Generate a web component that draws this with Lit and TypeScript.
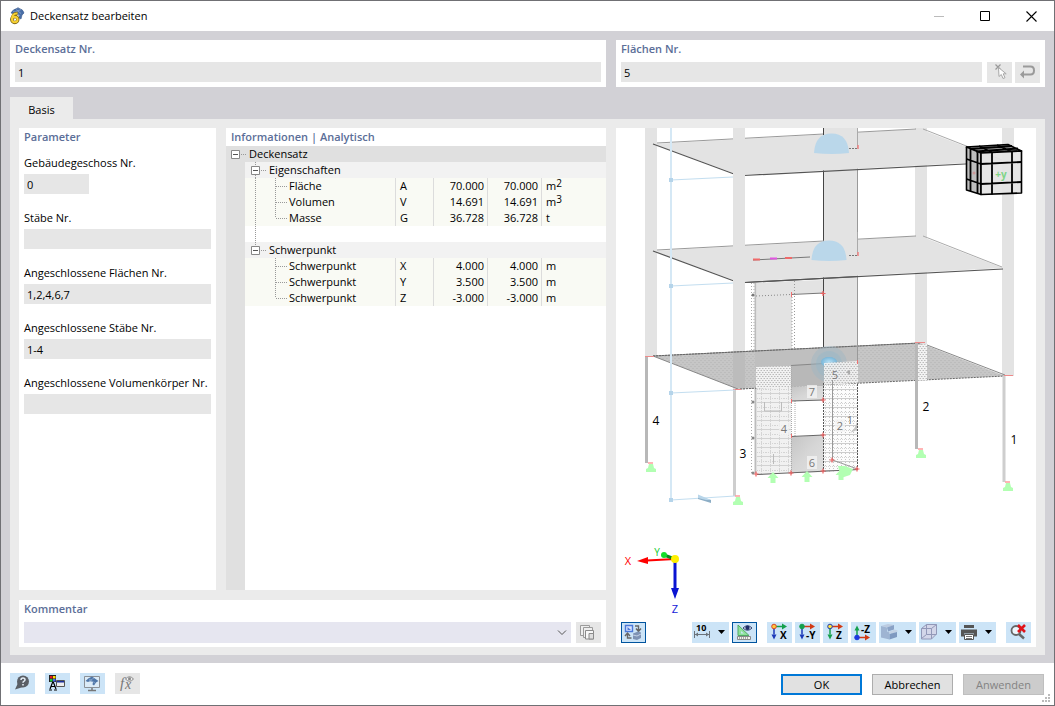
import { LitElement, html, svg, css, nothing } from "lit";
import { customElement, property } from "lit/decorators.js";

const base = css`
  * { box-sizing: border-box; }
  :host { font-family: "Open Sans", "Noto Sans", sans-serif; font-size: 11px; line-height: 16px; color: #000; }
  button, input, select { font: inherit; color: inherit; margin: 0; border: 0; padding: 0; border-radius: 0; }
  svg { display: block; }
  h2 { margin: 0; height: 18px; line-height: 18px; font-size: 11px; font-weight: 600; color: #5b6e98; }
`;

/* ---------- icons ---------- */

const icon = (body: unknown, w = 25, h = 21) =>
  html`<svg width=${w} height=${h} viewBox="0 0 ${w} ${h}" aria-hidden="true">${body}</svg>`;

const down = svg`<path d="M26 8h7l-3.500 4z" fill="#000"/>`;

const axes = (ox: number, oy: number, dot: string, hc: string, vc: string, up: boolean, label: string, lx: number, ly: number) => svg`
  <path d="M${ox} ${oy}h9" stroke=${hc} stroke-width="1.500"/>
  <path d="M${ox + 8} ${oy - 3}l5 3l-5 3z" fill=${hc}/>
  <path d="M${ox} ${oy}v${up ? -8 : 8}" stroke=${vc} stroke-width="1.500"/>
  <path d=${up ? `M${ox - 2.5} ${oy - 7}l2.500 -5l2.500 5z` : `M${ox - 2.5} ${oy + 8}l2.500 5l2.500 -5z`} fill=${vc}/>
  <circle cx=${ox} cy=${oy} r="2.300" fill=${dot} stroke=${dot === "#ffe23c" ? "#1c39b8" : dot === "#ffc83c" ? "#d8452a" : dot}/>
  <text x=${lx} y=${ly} font-size="10" font-weight="700">${label}</text>`;

const icons: Record<string, unknown> = {
  sync: icon(svg`
    <path d="M4.500 3.500h7v6h-7z" fill="#dbe6ff" stroke="#4c78d8" stroke-width="1.400"/><path d="M6.500 5v3h3.500z" fill="#4c78d8"/>
    <path d="M14 4h3.500v4M15 6.500l2.500 3l2.500-3" fill="none" stroke="#666" stroke-width="1.400"/>
    <path d="M10.500 16h-4v-4M4 14l2.500-3l2.500 3" fill="none" stroke="#666" stroke-width="1.400"/>
    <path d="M12 11.500l5-2l3 1v5.500l-4 2l-4-1z" fill="#7e92b4"/><path d="M12 13l4 1l4-2" stroke="#c5d2e6" fill="none"/>`),
  dim: icon(svg`<path d="M2.500 9v7M17.500 9v7M3 12.500h14" stroke="#6b737b" fill="none"/><path d="M3 12.500l3-2v4zM17 12.500l-3-2v4z" fill="#6b737b"/>
    <text x="4" y="9" font-size="9" font-weight="700">10</text>${down}`, 37),
  ruler: icon(svg`<path d="M6 3v10.500h11z" fill="#8fe29a" stroke="#52a865"/><path d="M9 9v2.500h3z" fill="#cce4f7"/>
    <path d="M5.500 14.500h13v3h-13z" fill="#f4f4ea" stroke="#8b8b8b"/><path d="M7.500 15v2M9.500 15v2M11.500 15v2M13.500 15v2M15.500 15v2" stroke="#aaa"/>
    <path d="M11 6q4.500-4.500 9 0q-4.500 4.500-9 0z" fill="#e8ecff" stroke="#30406e"/><circle cx="15.500" cy="5.700" r="2.200" fill="#1f2e68"/>`),
  ax: icon(axes(7, 4.5, "#ffc83c", "#14a04c", "#1c39b8", false, "X", 13, 17)),
  ay: icon(axes(7, 4.5, "#14a04c", "#d23a14", "#1c39b8", false, "-Y", 11, 17)),
  az: icon(axes(7, 4.5, "#ffe23c", "#d23a14", "#14a04c", false, "Z", 13, 17)),
  amz: icon(axes(6, 15.5, "#1c39e0", "#d23a14", "#14a04c", true, "-Z", 10, 11)),
  steps: icon(svg`<path d="M2 4l7-2l6 1l-6 2.500z" fill="#bccbe0"/><path d="M2 4l6 1.500v4l2.500.500v7.500l-8.500-2z" fill="#9eb4d2"/>
    <path d="M8 5.500l7-2.500v4.500l-6 2z" fill="#8aa2c6"/><path d="M9.500 10l6-2.500l3 1v1l-6 2.500z" fill="#c3d1e4"/><path d="M10.500 12l7.500-2v5l-7.500 2.500z" fill="#7f99c0"/>${down}`, 37),
  box: icon(svg`<path d="M2.500 6.500l5-4h10v9.500l-5 5h-10z" fill="#d3d6e9"/><path d="M2.500 6.500l5-4h10l-5 4zM12.500 6.500v10.500M2.500 6.500v10.500h10l5-5v-9.500M7.500 2.500v10h10M7.500 12.500l-5 4" fill="none" stroke="#9298b8"/>${down}`, 37),
  print: icon(svg`<path d="M5 3h10v3h-10z" fill="#555"/><path d="M2 7.500h16v7h-3v-3h-10v3h-3z" fill="#555"/><path d="M5.500 12.500h9v5h-9z" fill="#fff" stroke="#555"/><path d="M7 14.500h6M7 16.500h6" stroke="#777"/>${down}`, 37),
  nozoom: icon(svg`<circle cx="10" cy="8.500" r="4.500" fill="#eef5fb" stroke="#666" stroke-width="1.800"/><path d="M13 12l5 4.500" stroke="#666" stroke-width="2.500"/>
    <path d="M12 3l7 7M19 3l-7 7" stroke="#e0131a" stroke-width="2.600"/>`),
  pick: icon(svg`<path d="M8.500 2.500l5 5M13.500 2.500l-5 5" stroke="#999" stroke-width="1.200"/>
    <path d="M11.500 5.500l.500 9l2.300-2l1.700 4l2-.800l-1.800-3.900h3z" fill="#fff" stroke="#a8a8a8"/>`),
  back: icon(svg`<path d="M8 4.500h7.500q3.500 0 3.500 4t-3.500 4h-8" fill="none" stroke="#9a9a9a" stroke-width="2"/><path d="M9 8.500l-4 4l4 4z" fill="#9a9a9a"/>`),
  copy: icon(svg`<path d="M4.500 3.500h9v10h-9z" fill="#eee" stroke="#9b9b9b"/><path d="M7.500 5.500h9v10h-9z" fill="#eee" stroke="#9b9b9b"/><path d="M9.500 8.500h8v8.500h-8z" fill="#f7f7f7" stroke="#8a8a8a"/><path d="M13 11.500h4.500v5.500h-4.500z" fill="#ddd" stroke="#8a8a8a"/>`),
  help: icon(svg`<circle cx="13" cy="8.500" r="6" fill="#5a5f66"/><path d="M8 10l-3 6.500l8-2.500z" fill="#5a5f66"/>
    <path d="M11 7q0-2 2-2t2 1.800q0 1-1.200 1.600q-.8.400-.8 1.300" fill="none" stroke="#e4eef7" stroke-width="1.500"/><path d="M12.200 11h1.600v1.500h-1.600z" fill="#e4eef7"/>`),
  colors: icon(svg`<path d="M4 2h7v7h-7z" fill="#222"/><path d="M5 3h2.500v2.500h-2.500z" fill="#e41b23"/><path d="M8 3h2.500v2.500h-2.500z" fill="#ffe000"/><path d="M5 6h2.500v2.500h-2.500z" fill="#1ac83c"/><path d="M8 6h2.500v2.500h-2.500z" fill="#4a62f0"/>
    <path d="M5 16l2.500-6.500h1l2.500 6.500M6 13.500h4" stroke="#000" fill="none" stroke-width="1.200"/><path d="M4 17h3M9 17h3" stroke="#000"/>
    <path d="M11.500 7.500h8v6h-8z" fill="#eee" stroke="#555"/><path d="M12 8h7v1.500h-7z" fill="#1b2f9c"/>`),
  screen: icon(svg`<path d="M4.500 3.500h15v11h-15z" fill="#dcebf7" stroke="#8a9097"/><path d="M5.500 8q3-3.500 6.500-4.500l6.500 4.500l-2.500 1.500l-2 3l-1.500-1l.5-2.500q-3-1.500-5 0z" fill="#4f76a8"/><path d="M9 6l6 4M14 5l-5 3" stroke="#9db9d8" stroke-width=".6"/><path d="M12 15v2M8 17.500h8" stroke="#777" stroke-width="1.500"/>`),
  fx: icon(svg`<text x="5" y="15" font-family="Liberation Serif, serif" font-style="italic" font-size="15" fill="#777">f</text>
    <text x="10" y="16" font-family="Liberation Serif, serif" font-style="italic" font-size="14" fill="#777">x</text>
    <path d="M10.500 6q4-4.500 8 0q-4 4.500-8 0z" fill="#eee" stroke="#888"/><circle cx="14.500" cy="5.800" r="1.500" fill="#888"/>`),
};

const logo = html`<svg width="18" height="18" viewBox="0 0 18 18" aria-hidden="true">
  <path d="M3 6q2-4 6-4.500l1-1l1 1q4 .5 5 4.500l-2 2l-1 4l-2-1V8z" fill="#4a6fa8" stroke="#36558a" stroke-width=".6"/>
  <path d="M8 2.500l5 4M5 4l7 5M13 2.500l-7 3" stroke="#9fb8d8" stroke-width=".6"/>
  <path d="M9.500 6.500q-5-.5-5 6" fill="none" stroke="#7a6414" stroke-width="3.400"/><circle cx="6.800" cy="12.500" r="3" fill="none" stroke="#7a6414" stroke-width="3.400"/>
  <path d="M9.500 6.500q-5.500-.5-5.500 6" fill="none" stroke="#f6d032" stroke-width="2"/><circle cx="6.800" cy="12.500" r="2.800" fill="none" stroke="#f6d032" stroke-width="2"/></svg>`;

/* ---------- small parts ---------- */

@customElement("icon-button")
class IconButton extends LitElement {
  @property() name = "";
  @property() label = "";
  @property({ type: Boolean }) active = false;
  @property({ type: Boolean }) disabled = false;
  static styles = [base, css`
    :host { display: block; flex: none; }
    button { display: block; height: 21px; background: #cce4f7; }
    .active { box-shadow: inset 0 0 0 1px #00549e; }
    button:disabled { background: #e6e6e6; }
  `];
  render() {
    return html`<button class=${this.active ? "active" : ""} aria-label=${this.label} ?disabled=${this.disabled}>${icons[this.name]}</button>`;
  }
}

/* ---------- property tree ---------- */

type Row = { kind: "root" | "group" | "leaf" | "gap"; name?: string; sym?: string; value?: string; unit?: string; sup?: string; rail?: boolean; last?: boolean };

const rows: Row[] = [
  { kind: "root", name: "Deckensatz" },
  { kind: "group", name: "Eigenschaften", rail: true },
  { kind: "leaf", name: "Fläche", sym: "A", value: "70.000", unit: "m", sup: "2", rail: true },
  { kind: "leaf", name: "Volumen", sym: "V", value: "14.691", unit: "m", sup: "3", rail: true },
  { kind: "leaf", name: "Masse", sym: "G", value: "36.728", unit: "t", rail: true, last: true },
  { kind: "gap", rail: true },
  { kind: "group", name: "Schwerpunkt" },
  { kind: "leaf", name: "Schwerpunkt", sym: "X", value: "4.000", unit: "m" },
  { kind: "leaf", name: "Schwerpunkt", sym: "Y", value: "3.500", unit: "m" },
  { kind: "leaf", name: "Schwerpunkt", sym: "Z", value: "-3.000", unit: "m", last: true },
];

@customElement("property-tree")
class PropertyTree extends LitElement {
  static styles = [base, css`
    :host { display: block; background: linear-gradient(to right, #e0e0e0 19px, #fff 19px); }
    table { width: 100%; table-layout: fixed; border-collapse: separate; border-spacing: 0; }
    .c-gutter { width: 19px; } .c-name { width: 150px; } .c-sym { width: 38px; } .c-num { width: 54px; }
    td { padding: 0; height: 16px; line-height: 16px; vertical-align: top; white-space: nowrap; }
    .node { display: flex; height: 16px; padding-left: 6px; }
    .root .node { padding-left: 5px; }
    .root td { background: #e0e0e0; }
    .group .main { background: #f2f2f2; }
    .leaf .main { background: #f9faf4; }
    .cell { border-left: 1px solid #dcdcdc; padding: 0 4px; }
    .num { text-align: right; padding: 0 3px; }
    button { background: none; display: block; }
    .dots { stroke: #999; stroke-dasharray: 1 1; fill: none; }
    sup { font-size: 10px; line-height: 0; vertical-align: 3px; }
  `];
  private toggle(r: Row) {
    return html`<button aria-label="Zuklappen"><svg width="18" height="16" viewBox="0 0 18 16">
      <path class="dots" d="M10 8.500h5"/>
      ${r.kind === "group" ? svg`<path class="dots" d="M4.500 0v4"/>` : nothing}
      ${r.rail ? svg`<path class="dots" d="M4.500 13v3"/>` : nothing}
      <path d="M.5 4.500h8v8h-8z" fill="#fff" stroke="#888"/><path d="M2 8.500h5" stroke="#555"/></svg></button>`;
  }
  private lines(r: Row) {
    return html`<svg width="38" height="16" viewBox="0 0 38 16">
      ${r.rail ? svg`<path class="dots" d="M4.500 0v16"/>` : nothing}
      ${r.kind === "leaf" ? svg`<path class="dots" d="M24.500 0v${r.last ? 8 : 16}M25 8.500h11"/>` : nothing}</svg>`;
  }
  render() {
    return html`<table>
      <colgroup><col class="c-gutter"><col class="c-name"><col class="c-sym"><col class="c-num"><col class="c-num"><col></colgroup>
      <tbody>${rows.map((r) => {
        if (r.kind === "root") return html`<tr class="root"><td colspan="6"><div class="node">${this.toggle(r)}<span>${r.name}</span></div></td></tr>`;
        if (r.kind === "group") return html`<tr class="group"><td></td><td class="main" colspan="5"><div class="node">${this.toggle(r)}<span>${r.name}</span></div></td></tr>`;
        if (r.kind === "gap") return html`<tr><td></td><td colspan="5"><div class="node">${this.lines(r)}</div></td></tr>`;
        return html`<tr class="leaf"><td></td><td class="main"><div class="node">${this.lines(r)}<span>${r.name}</span></div></td>
          <td class="main cell">${r.sym}</td><td class="main cell num">${r.value}</td><td class="main cell num">${r.value}</td>
          <td class="main cell">${r.unit}${r.sup ? html`<sup>${r.sup}</sup>` : nothing}</td></tr>`;
      })}</tbody></table>`;
  }
}

/* ---------- 3D model view ---------- */

const slab = (dy: number) => svg`
  <path d="M653 ${144 + dy}L920 ${129 + dy}L1003 ${161 + dy}L739 ${175 + dy}z" fill="#e3e3e3"/>
  <path d="M657 ${143 + dy}L916 ${129 + dy}" stroke="#999"/>
  <path d="M923 ${129 + dy}L1002 ${160 + dy}" stroke="#aaa"/>
  <path d="M653 ${144 + dy}L734 ${174 + dy}M744 ${175.5 + dy}L1003 ${162 + dy}" stroke="#555" stroke-width="1.200"/>
  <path d="M733 ${135 + dy}h12v45h-12z" fill="#e3e3e3"/>
  <path d="M824 ${125 + dy}h34v23h-34z" fill="#e3e3e3"/>
  <path d="M857.500 ${125 + dy}v23" stroke="#aaa"/>
  <path d="M849 ${148.5 + dy}h8" stroke="#777" stroke-dasharray="2 1"/><path d="M858 ${145 + dy}v4" stroke="#f08080" stroke-width="1.500"/>`;

const dome = (x: number, y: number) => svg`<path d="M${x - 17.5} ${y}q1-19.500 17.500-19.500t17.500 19.500q-17 2-35 0z" fill="#bad7ea"/>`;

const support = (x: number, y: number) => svg`<path d="M${x - 2} ${y - 6}h4l1 4l2 1v3h-10v-3l2-1z" fill="#b2ffb2"/><path d="M${x - 3} ${y - 7}h5" stroke="#ff9d9d" stroke-width="1.500"/>`;

const arrowUp = (x: number, y: number) => svg`<path d="M${x} ${y - 7}l5.500 6h-3v5h-5v-5h-3z" fill="#b2ffb2"/>`;

const redDot = (x: number, y: number) => svg`<path d="M${x - 2.5} ${y}h5M${x} ${y - 2.5}v5" stroke="#ee6060" stroke-width="1.200"/>`;

const tag = (x: number, y: number, t: string, plate = true) => svg`
  ${plate ? svg`<rect x=${x - 5} y=${y - 7} width="10" height="13" fill="#f4f4f4" opacity=".75"/>` : nothing}
  <text x=${x} y=${y + 4} font-size="11" fill="#777" text-anchor="middle">${t}</text>`;

const scene = html`<svg class="scene" viewBox="616 128 420 519" preserveAspectRatio="xMidYMid meet" role="img" aria-label="Modellansicht">
  <defs>
    <pattern id="mesh" width="4" height="4" patternUnits="userSpaceOnUse"><path d="M0 0h4v4h-4z" fill="#c6c6c6"/><path d="M0 .5h2M2 2.500h2" stroke="#bababa" stroke-width=".8"/></pattern>
    <pattern id="speck" width="3" height="4" patternUnits="userSpaceOnUse"><path d="M0 0h3v4h-3z" fill="#f2f2f2"/><path d="M0 .5h1.500M1.500 2.500h1.500" stroke="#bcbcbc"/></pattern>
    <pattern id="grid" x="757" y="388" width="9" height="9" patternUnits="userSpaceOnUse"><path d="M0 0h9v9h-9z" fill="#f1f1f1"/><path d="M4.500 0v9M0 1.500h9" stroke="#d4d4d4" stroke-dasharray="1 1"/><path d="M0 5.500h9" stroke="#d2d2d2"/></pattern>
    <pattern id="grid2" x="824" y="384" width="8" height="9" patternUnits="userSpaceOnUse"><path d="M0 0h8v9h-8z" fill="#fcfcfc"/><path d="M1.500 0v9M5.500 0v9" stroke="#c6c6c6" stroke-dasharray="1 2"/><path d="M0 1.500h8" stroke="#d4d4d4" stroke-dasharray="1 1"/><path d="M0 5.500h8" stroke="#cdcdcd"/></pattern>
    <linearGradient id="panel" x1="0" y1="0" x2="1" y2="1"><stop offset="0" stop-color="#c4c4c4"/><stop offset=".5" stop-color="#d6d6d6"/><stop offset="1" stop-color="#e0e0e0"/></linearGradient>
    <radialGradient id="ball"><stop offset="0" stop-color="#b5dff5"/><stop offset="1" stop-color="#79b6d8"/></radialGradient>
  </defs>
  <g fill="none">
    <path d="M645 128h12v228h-12zM733 128h12v262h-12zM915 128h12v216h-12zM1002 128h12v248h-12z" fill="#e3e3e3"/>
    <path d="M824 128h34v220h-34z" fill="#e3e3e3"/>
    <path d="M823.500 128v221" stroke="#444"/><path d="M857.500 128v218" stroke="#999"/>
    ${slab(0)}${slab(107)}
    <path d="M823.500 128v7" stroke="#444"/>
    ${dome(831.5, 153)}${dome(829, 260)}
    <path d="M753 260l57-3" stroke="#777"/><path d="M753 259.500h7M785 258h7" stroke="#ef6a6a" stroke-width="2"/><path d="M770 258.500h7" stroke="#e055e0" stroke-width="2"/>
    <path d="M757 283L792 281v70l-35 2zM792 281l31-1v13l-31 1z" fill="#e3e3e3"/>
    <path d="M745 283h8v68h-8z" fill="#fff"/>
    <path d="M751.500 283v190M754 283v68" stroke="#aaa" stroke-dasharray="1 2"/>
    <path d="M755.500 283v190" stroke="#bcbcbc" stroke-width="2"/>
    <path d="M794.500 281v69M792 294v56" stroke="#999" stroke-dasharray="1 2"/>
    <path d="M756 296l35-1.500" stroke="#888" stroke-dasharray="1 2"/><path d="M791 294.500l33-1.500" stroke="#777"/>
    <path d="M745 282.500l113-6" stroke="#555" stroke-width="1.200"/>
    ${redDot(823, 293.5)}<path d="M791.500 292v5" stroke="#f07070"/><circle cx="753" cy="295" r="1.500" fill="#777"/>

    <path d="M653 356L745 351L920 343L1005 376L858 383L738 389z" fill="url(#mesh)"/>
    <path d="M733 352l12-1v38l-12-2z" fill="#bcbcbc"/>
    <path d="M755 351l103-5v20l-103 4z" fill="#bfbfbf"/>
    <path d="M653 356L920 343M927 345L1005 375M653 356L738 389" stroke="#888"/>
    <path d="M653 356L920 343M740 389L1005 376" stroke="#666" stroke-dasharray="2 1"/>
    <path d="M918 345l9-1v36l-9 1z" fill="url(#speck)"/>
    <path d="M756 367l35-1v22l-35 1z" fill="url(#speck)"/>
    <path d="M791 365l33-1v22l-33 1z" fill="#b8b8b8"/><path d="M791 365.500l33-2" stroke="#888"/>
    <circle cx="829" cy="364" r="18" fill="#9db6c4" opacity=".45"/><circle cx="829" cy="364" r="13" fill="#8fb6cc" opacity=".35"/><ellipse cx="829" cy="362" rx="8" ry="5" fill="url(#ball)"/>
    <path d="M824 363l34-2v22l-34 2z" fill="url(#speck)" opacity=".9"/>
    <path d="M857.500 345v18" stroke="#999"/>

    <path d="M757 389l34-2v86l-34 2z" fill="url(#grid)"/>
    <path d="M791 387l33-1v14l-33 1z" fill="url(#panel)"/>
    <path d="M791 401l33-1v36l-33 1z" fill="#fff"/>
    <path d="M791 437l33-2v37l-33 1z" fill="url(#panel)"/>
    <path d="M824 385l34-1v86l-34 2z" fill="url(#grid2)"/>
    <path d="M791.500 367v107M795 401v35" stroke="#aaa" stroke-dasharray="1 1"/>
    <path d="M757 474.500l101-5M791 401l33-1M791 436.500l33-1.500" stroke="#666" stroke-width="1.200"/>
    <path d="M823.500 383v88M857.500 384v86" stroke="#555" stroke-dasharray="2 1"/>
    <path d="M764.500 402v9h17v-9M773.500 454v10" stroke="#bbb"/>
    <path d="M832.500 380v80l25 9" stroke="#999"/><path d="M850 433q6-5 7-12v9z" fill="#c4c4c4"/><path d="M846 372l4-2v5z" fill="#aaa"/>
    ${redDot(823, 400)}${redDot(823, 435)}${redDot(823, 471)}${redDot(791, 473)}${redDot(756, 474)}${redDot(857, 469)}${redDot(832, 460)}
    <path d="M857.500 360v4M791.500 399v4M791.500 434v4" stroke="#f07070"/>
    <circle cx="753" cy="402" r="1.500" fill="#888"/><circle cx="753" cy="438" r="1.500" fill="#888"/><circle cx="753" cy="473" r="1.500" fill="#888"/>

    <path d="M646.500 357v106M916.500 343v106" stroke="#b8b8b8" stroke-width="3"/><path d="M734.500 390v106M1004 376v106" stroke="#cecece" stroke-width="3"/>
    <path d="M645 356.500h9M733 389.500h8M915 342.500h10M1004 375.500h9" stroke="#ee8a8a"/>
    <path d="M671 128v372" stroke="#d5e8f5" stroke-width="2"/>
    <path d="M671 180l62-3M671 286l62-3M671 393l64-3M671 500l64-4" stroke="#c3def0"/>
    <path d="M669 178h4v4h-4zM669 284h4v4h-4zM669 391h4v4h-4zM669 498h4v4h-4z" fill="#b5d4ea"/>
    <path d="M698 496l13 4v3l-13-4z" fill="#8daec6"/><path d="M698 494.500l13 5.500h-5l-8-2z" fill="#b9d6ea"/>
    ${support(651, 470)}${support(738, 503)}${support(921, 456)}${support(1008, 489)}
    ${arrowUp(773, 479)}${arrowUp(807, 478)}${arrowUp(841, 476)}<path d="M838 466h7l8 3l-3 6l-9 3z" fill="#b2ffb2"/>
    ${tag(835, 375, "5", false)}${tag(812, 392, "7")}${tag(784, 429, "4")}${tag(812, 463, "6")}${tag(840, 426, "2")}${tag(850, 420, "1", false)}
  </g>
  <g font-size="12" text-anchor="middle"><text x="656" y="425">4</text><text x="743" y="458">3</text><text x="926" y="411">2</text><text x="1014" y="444">1</text></g>

  <g stroke="#000" stroke-width="1.600" stroke-linejoin="round">
    <path d="M966.500 147L1008 144.500L1021.500 151L981 153z" fill="#9d9d9d"/>
    <path d="M966.500 147L981 153v41.500L966.500 190z" fill="#bdbdbd"/>
    <path d="M981 153L1021.500 151v42L981 194.500z" fill="#e4e4e4" fill-opacity=".93"/>
    <path d="M992 152.500v42M1012 151.500v42M981 164l40.500-2M981 184l40.500-2M981 164l-14.500-5M981 184l-14.500-5M970.500 148v43M977.500 151v42M970 149l42-3M976 151.500l42-3M979 146l13 6.500M997 145l14 6.500" fill="none" stroke-width="1.800"/>
  </g>
  <text x="1001" y="178" font-size="10" font-weight="700" fill="#7fd487" text-anchor="middle">+y</text><circle cx="974" cy="173" r="1.500" fill="#c99"/>

  <path d="M675 560v30" stroke="#0a14d2" stroke-width="3"/><path d="M671 588h8l-4 11z" fill="#0a14d2"/>
  <path d="M675 559l-28 1.500" stroke="#f00" stroke-width="2"/><path d="M637 561l11-4v7z" fill="#f00"/>
  <path d="M675 559l-11-4" stroke="#0a8a1e" stroke-width="3"/><circle cx="664" cy="555" r="3" fill="#12dd2a"/>
  <circle cx="675" cy="559" r="4" fill="#ffef00"/>
  <g font-size="11" text-anchor="middle"><text x="628" y="565" fill="#f00">X</text><text x="657" y="556" fill="#12c82a" font-size="10">Y</text><text x="675" y="613" fill="#1420d8">Z</text></g>
</svg>`;

@customElement("model-view")
class ModelView extends LitElement {
  static styles = [base, css`
    :host { display: grid; background: #fff; overflow: hidden; }
    .scene, .bar { grid-area: 1 / 1; }
    .scene { width: 100%; height: 100%; min-height: 0; }
    .bar { align-self: end; display: flex; gap: 3px; padding: 0 5px 4px; }
    .grow { margin-left: auto; }
    .sep { margin-left: 7px; }
  `];
  render() {
    return html`${scene}
      <div class="bar" role="toolbar">
        <icon-button name="sync" label="Ansicht wechseln" active></icon-button>
        <icon-button class="grow" name="dim" label="Bemaßung"></icon-button>
        <icon-button name="ruler" label="Anzeigen" active></icon-button>
        <icon-button class="sep" name="ax" label="Ansicht X"></icon-button>
        <icon-button name="ay" label="Ansicht -Y"></icon-button>
        <icon-button name="az" label="Ansicht Z"></icon-button>
        <icon-button name="amz" label="Ansicht -Z"></icon-button>
        <icon-button name="steps" label="Darstellung"></icon-button>
        <icon-button name="box" label="Volumen"></icon-button>
        <icon-button name="print" label="Drucken"></icon-button>
        <icon-button class="sep" name="nozoom" label="Zoom zurücksetzen"></icon-button>
      </div>`;
  }
}

/* ---------- dialog ---------- */

const fields = [
  { id: "floor", label: "Gebäudegeschoss Nr.", value: "0", short: true },
  { id: "members", label: "Stäbe Nr.", value: "" },
  { id: "csurf", label: "Angeschlossene Flächen Nr.", value: "1,2,4,6,7" },
  { id: "cmem", label: "Angeschlossene Stäbe Nr.", value: "1-4" },
  { id: "csol", label: "Angeschlossene Volumenkörper Nr.", value: "" },
];

@customElement("app-root")
class AppRoot extends LitElement {
  static styles = [base, css`
    :host { display: flex; flex-direction: column; box-sizing: border-box; min-height: 100vh; background: #d2d1d6; border: 1px solid #707074; }
    header { display: flex; align-items: center; height: 30px; padding-left: 7px; background: #fff; }
    h1 { margin: 0 auto 0 4px; font-weight: 400; font-size: 11px; line-height: 16px; }
    header button { width: 46px; height: 30px; background: none; display: grid; place-items: center; }
    main { flex: 1; display: flex; flex-direction: column; padding: 9px 9px 8px; }
    .card { background: #fff; padding: 0 5px 4px; min-width: 0; }
    .top { display: grid; grid-template-columns: 596fr 429fr; gap: 10px; }
    .line { display: flex; gap: 3px; margin-top: 4px; height: 21px; align-items: flex-start; }
    .line input { flex: 1; margin-right: 2px; }
    .wide input { margin-right: 0; }
    input { height: 20px; padding: 0 3px; background: #e6e6e6; min-width: 0; width: 100%; }
    .tab { align-self: flex-start; margin-top: 10px; height: 22px; width: 63px; background: #ebebeb; padding-top: 3px; }
    .page { flex: 1; background: #ebebeb; padding: 9px 9px 8px; display: grid; grid-template-columns: 587fr 420fr; gap: 10px; }
    .left { display: flex; flex-direction: column; gap: 10px; min-width: 0; }
    .cols { flex: 1; display: flex; gap: 10px; }
    .params { width: 197px; }
    .info { flex: 1; background: #fff; display: flex; flex-direction: column; min-width: 0; }
    .info h2 { padding-left: 5px; }
    .info property-tree { flex: 1; }
    .form { display: grid; gap: 16px; margin-top: 9px; }
    .form label { display: block; margin-bottom: 3px; }
    .form .short { width: 65px; }
    .form input { display: block; }
    .combo { flex: 1; display: grid; margin-right: 2px; }
    .combo select, .combo svg { grid-area: 1 / 1; }
    .combo select { appearance: none; height: 21px; width: 100%; background: #e6e6f0; }
    .combo svg { justify-self: end; align-self: center; margin-right: 4px; pointer-events: none; }
    footer { position: relative; display: flex; gap: 10px; align-items: flex-start; background: #fff; padding: 10px 10px 10px 9px; }
    footer .push { margin-left: auto; }
    .btn { width: 81px; height: 21px; margin-top: 1px; line-height: 15px; background: #e1e1e1; border: 1px solid #adadad; }
    .btn.ok { border: 2px solid #0078d7; }
    .btn:disabled { background: #ccc; border-color: #bfbfbf; color: #838383; }
    .grip { position: absolute; right: 3px; bottom: 2px; }
  `];
  render() {
    return html`
      <header>${logo}<h1>Deckensatz bearbeiten</h1>
        <button aria-label="Minimieren" disabled><svg width="11" height="11"><path d="M0 5.500h10" stroke="#bbb"/></svg></button>
        <button aria-label="Maximieren"><svg width="11" height="11"><path d="M.5.5h9v9h-9z" fill="none" stroke="#000"/></svg></button>
        <button aria-label="Schließen"><svg width="11" height="11"><path d="M.5.5l10 10M10.500.5l-10 10" stroke="#000" stroke-width="1.100"/></svg></button>
      </header>
      <main>
        <div class="top">
          <section class="card"><h2><label for="no">Deckensatz Nr.</label></h2>
            <div class="line wide"><input id="no" .value=${"1"} readonly></div></section>
          <section class="card"><h2><label for="surf">Flächen Nr.</label></h2>
            <div class="line"><input id="surf" .value=${"5"} readonly>
              <icon-button name="pick" label="Auswählen" disabled></icon-button>
              <icon-button name="back" label="Umkehren" disabled></icon-button></div></section>
        </div>
        <button class="tab" role="tab" aria-selected="true">Basis</button>
        <div class="page">
          <div class="left">
            <div class="cols">
              <section class="card params"><h2>Parameter</h2>
                <div class="form">${fields.map((f) => html`<div><label for=${f.id}>${f.label}</label>
                  <input id=${f.id} class=${f.short ? "short" : ""} .value=${f.value} readonly></div>`)}</div></section>
              <section class="info"><h2>Informationen | Analytisch</h2><property-tree></property-tree></section>
            </div>
            <section class="card"><h2><label for="comment">Kommentar</label></h2>
              <div class="line"><div class="combo"><select id="comment"><option></option></select>
                <svg width="10" height="6"><path d="M1 .5l4 4l4-4" fill="none" stroke="#555"/></svg></div>
                <icon-button name="copy" label="Kommentare" disabled></icon-button></div></section>
          </div>
          <model-view></model-view>
        </div>
      </main>
      <footer>
        <icon-button name="help" label="Hilfe"></icon-button>
        <icon-button name="colors" label="Farben"></icon-button>
        <icon-button name="screen" label="Anzeige"></icon-button>
        <icon-button name="fx" label="Formel" disabled></icon-button>
        <button class="btn ok push">OK</button><button class="btn">Abbrechen</button><button class="btn" disabled>Anwenden</button>
        <svg class="grip" width="9" height="9"><path d="M6 0h2v2h-2zM3 3h2v2h-2zM6 3h2v2h-2zM0 6h2v2h-2zM3 6h2v2h-2zM6 6h2v2h-2z" fill="#bbb"/></svg>
      </footer>`;
  }
}
